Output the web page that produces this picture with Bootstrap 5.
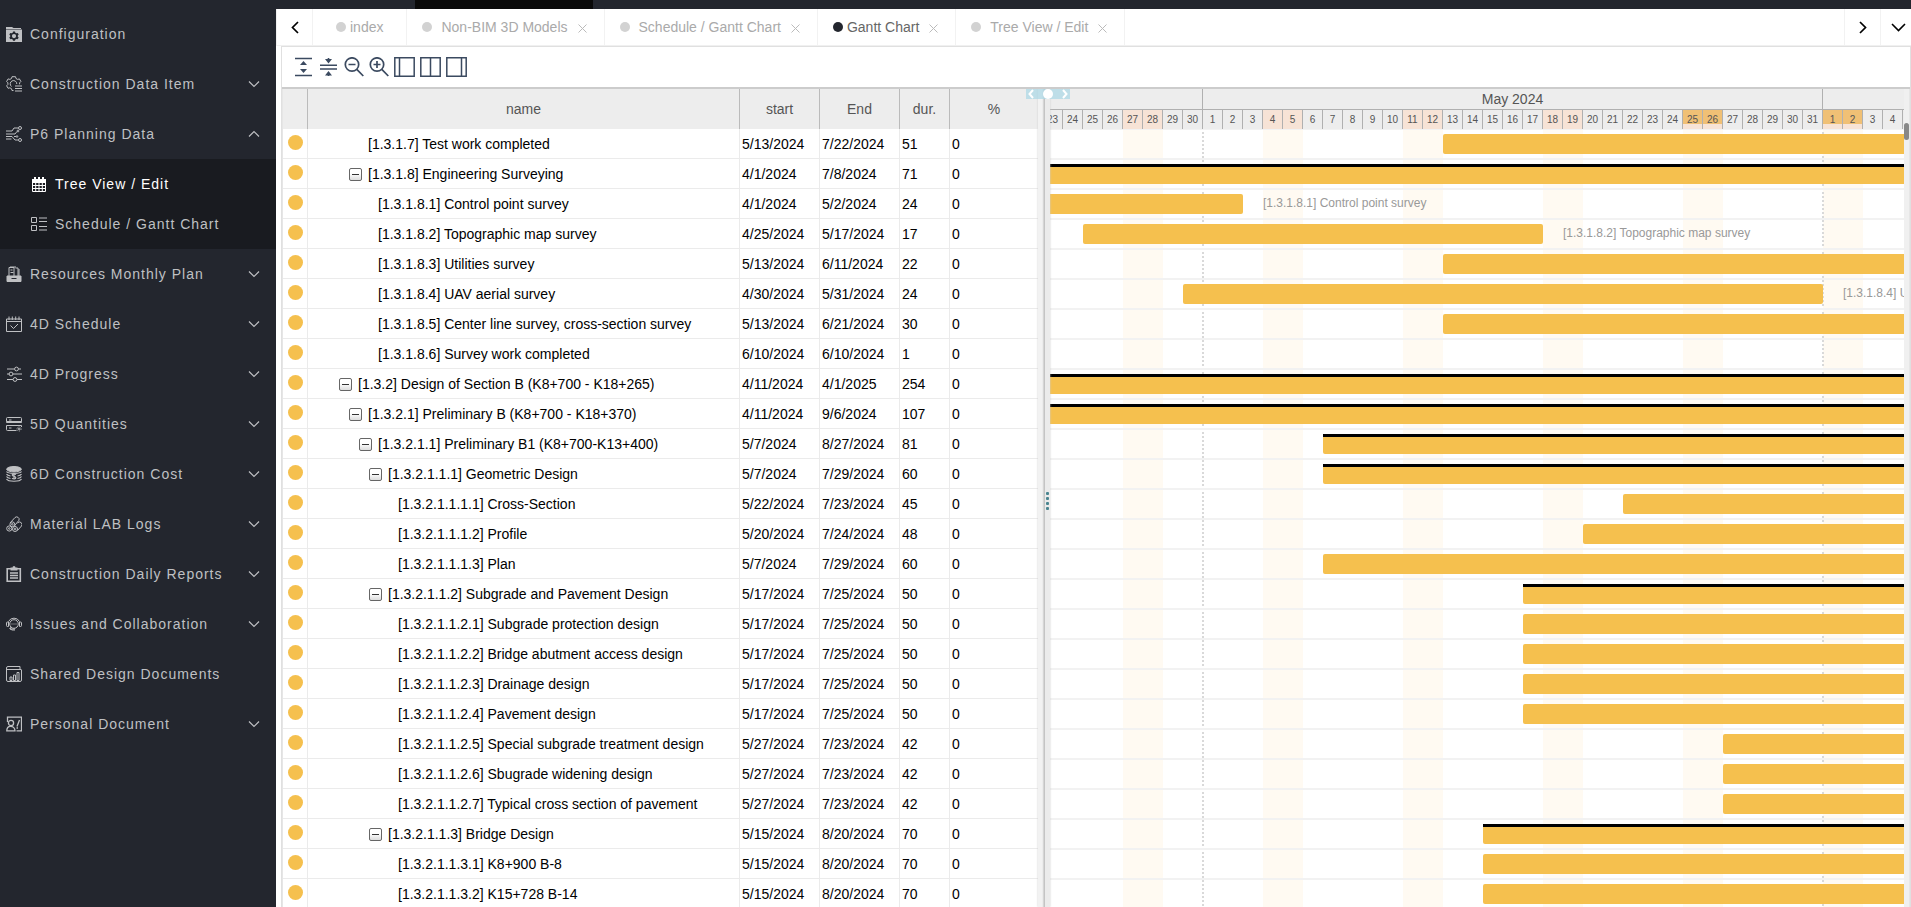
<!DOCTYPE html>
<html lang="en">
<head>
<meta charset="utf-8">
<meta name="viewport" content="width=device-width, initial-scale=1">
<title>Gantt Chart</title>
<link href="https://cdn.jsdelivr.net/npm/bootstrap@5.3.0/dist/css/bootstrap.min.css" rel="stylesheet">
<style>
:root { --day: 20px; --row: 30px; --dark: #23262e; --amber: #f5c04e; }
body { font-family: "Liberation Sans", Arial, sans-serif; font-size: 14px; line-height: 20px; color: #000; }
button { border: 0; background: none; padding: 0; color: inherit; }
svg { display: block; flex: none; }
.line-icon { fill: none; stroke: currentColor; }

/* top strip */
.top-strip { height: 9px; background: var(--dark); padding-left: 415px; }
.top-strip-item { width: 178px; background: #090909; }

/* side menu */
.side-menu { width: 276px; background: var(--dark); letter-spacing: 1px; }
.side-menu a { height: 50px; padding: 0 16px 0 6px; gap: 8px; color: #bfc0c3; text-decoration: none; white-space: nowrap; }
.side-menu .sub-menu { background: #191b20; padding: 5px 0; }
.side-menu .sub-menu a { height: 40px; padding-left: 31px; }
.side-menu a.current { color: #fff; }

/* page tabs */
.page-tabs { height: 37px; border-bottom: 1px solid #f0f0f0; border-left: 1px solid #f0f0f0; }
.page-tabs .edge-btn { width: 36px; border-right: 1px solid #f2f2f2; }
.page-tabs .edge-btn.at-end { border-right: 0; border-left: 1px solid #f2f2f2; }
.page-tabs .edge-btn.last-btn { width: 31px; padding-left: 5px; }
.page-tab { padding: 0 17px 0 15px; border-right: 1px solid #f2f2f2; color: #aaa; white-space: nowrap; }
.page-tab.home { padding: 0 23px; }
.page-tab.current { color: #666; }
.page-tab a { color: inherit; text-decoration: none; padding-left: 9px; }
.page-tab.home a, .page-tab.current a { padding-left: 4px; }
.tab-dot { width: 10px; height: 10px; border-radius: 50%; background: #d2d2d2; }
.current .tab-dot { background: var(--dark); }
.page-tab button { margin-left: 10px; padding-top: 2px; color: #bbb; }

/* work frame */
.work-frame { margin-left: 5px; border: 1px solid #e0e0e0; border-bottom: 0; }
.tool-row { height: 42px; padding: 0 12px; border-bottom: 2px solid #ccc; color: #3b4a60; }
.tool-set { width: 173px; }
.split-body { border: solid #e6e6e6; border-width: 0 1px; }

/* task grid */
.task-pane { width: 755px; flex: none; }
.task-grid { width: 100%; table-layout: fixed; border-collapse: separate; border-spacing: 0; }
.task-grid th { height: 40px; background: #ededed; border-right: 1px solid #bbb; color: #555; font-weight: 400; text-align: center; }
.task-grid td { height: var(--row); padding: 1px 2px 0; line-height: 28px; border: solid #ebebeb; border-width: 0 1px 1px 0; white-space: nowrap; overflow: hidden; }
.task-grid td:last-child, .task-grid th:last-child { border-right: 0; }
.col-dot { width: 25px; } .col-date { width: 80px; } .col-dur { width: 50px; } .col-pct { width: 88px; }
.state-dot { display: block; width: 15px; height: 15px; margin: -3px 0 0 3px; border-radius: 50%; background: var(--amber); }
.task-grid td.task-name { padding-left: calc(1px + var(--lvl) * 10px); }
.fold-slot { width: 19px; }
.fold-btn { display: block; width: 13px; height: 13px; border: 1px solid #666; border-radius: 2px; background: linear-gradient(#333, #333) center/7px 1px no-repeat, linear-gradient(#fff 40%, #dcdcdc); }

/* splitter */
.split-bar { width: 12px; flex: none; background: linear-gradient(90deg, #f2f2f2 0 4px, #e6e6e6 5px, #c4c4c4 6px 7px, #ebebeb 7px); box-shadow: 0 0 2px #ccc; z-index: 3; }
.split-arrows { top: 0; left: -12px; width: 44px; height: 10px; padding: 0 2px; background: rgba(173,216,230,.75); }
.split-knob { top: 0; left: 17px; width: 10px; height: 10px; border-radius: 50%; background: #fff; }
.split-grip { gap: 2px; padding: 6px 0 0 8px; }
.split-grip i { width: 3px; height: 3px; border-radius: 1px; background: #4a8590; }

/* time chart */
.time-head { height: 40px; background: #ededed; color: #555; }
.time-track { margin-left: -7px; }
.month-cell { flex: none; width: calc(var(--n) * var(--day)); height: 21px; border: solid #b0b0b0; border-width: 0 1px 1px 0; text-align: center; line-height: 20px; }
.day-cell { flex: none; width: var(--day); height: 19px; border-right: 1px solid #b0b0b0; font-size: 10px; line-height: 20px; text-align: center; }
.day-cell.off { background: #f7e3d6; }
.day-cell.off.hot { background: linear-gradient(#f0c075 14px, #f7e3d6 14px); }
.off-band { top: 0; bottom: 0; left: calc(var(--x) * var(--day)); width: 40px; background: #fffaf2; }
.month-line { top: 3px; bottom: 0; left: calc(var(--x) * var(--day) - 1px); width: 2px; background: repeating-linear-gradient(#d9d9d9 0 2px, transparent 2px 4px); }
.bar-row { position: relative; height: var(--row); border: solid #f2f2f2; border-width: 1px 0; }
.task-bar { top: 4px; left: calc(var(--x) * var(--day)); width: calc(var(--n) * var(--day)); height: 20px; border-radius: 2px; background: var(--amber); }
.task-bar.group { border-top: 3px solid #000; border-radius: 0 0 2px 2px; }
.bar-note { left: 100%; top: 0; padding-left: 20px; font-size: 12px; line-height: 18px; color: #999; white-space: nowrap; }
.scroll-rail { width: 5px; flex: none; background: #f0f0f0; padding-top: 34px; }
.scroll-thumb { height: 17px; border-radius: 3px; background: #888; }
</style>
</head>
<body class="vh-100 d-flex flex-column overflow-hidden bg-white">
<header class="top-strip d-flex flex-shrink-0"><div class="top-strip-item"></div></header>

<div class="d-flex flex-grow-1" style="min-height:0">
  <nav class="side-menu flex-shrink-0" aria-label="Main menu" id="sideMenu"></nav>

  <main class="flex-grow-1 d-flex flex-column overflow-hidden">
    <div class="page-tabs d-flex flex-shrink-0">
      <button type="button" class="edge-btn d-flex align-items-center justify-content-center" aria-label="Previous tabs"><svg class="line-icon" width="8" height="13" viewBox="0 0 8 13" stroke-width="1.7"><path d="M7 1 1.500 6.500 7 12"/></svg></button>
      <div class="d-flex flex-grow-1" id="pageTabs"></div>
      <button type="button" class="edge-btn at-end d-flex align-items-center justify-content-center" aria-label="Next tabs"><svg class="line-icon" width="8" height="13" viewBox="0 0 8 13" stroke-width="1.7"><path d="M1 1 6.500 6.500 1 12"/></svg></button>
      <button type="button" class="edge-btn at-end last-btn d-flex align-items-center justify-content-center" aria-label="Tab actions"><svg class="line-icon" width="15" height="9" viewBox="0 0 15 9" stroke-width="1.6"><path d="M1 1 7.500 7.500 14 1"/></svg></button>
    </div>

    <section class="work-frame flex-grow-1 d-flex flex-column overflow-hidden">
      <div class="tool-row d-flex align-items-center flex-shrink-0">
        <div class="tool-set d-flex justify-content-between">
          <button type="button" aria-label="Expand all"><svg class="line-icon" width="20" height="20" viewBox="0 0 20 20" stroke-width="1.600"><path d="M1 1.500h17M1 18.500h17M9.500 6v2M9.500 12v2"/><path d="M6 8h7L9.500 4zM6 12h7l-3.500 4z" fill="currentColor" stroke="none"/></svg></button>
          <button type="button" aria-label="Collapse all"><svg class="line-icon" width="20" height="20" viewBox="0 0 20 20" stroke-width="1.600"><path d="M1 8.200h17M1 12h17M9.500 1v2M9.500 17v2"/><path d="M6 2h7L9.500 6.500zM6 18.500h7L9.500 14z" fill="currentColor" stroke="none"/></svg></button>
          <button type="button" aria-label="Zoom out"><svg class="line-icon" width="20" height="20" viewBox="0 0 20 20" stroke-width="1.700"><circle cx="8" cy="7.500" r="6.700"/><path d="M4.500 7.500h7M12.800 12.300 19.300 19"/></svg></button>
          <button type="button" aria-label="Zoom in"><svg class="line-icon" width="20" height="20" viewBox="0 0 20 20" stroke-width="1.700"><circle cx="8" cy="7.500" r="6.700"/><path d="M4.500 7.500h7M8 4v7M12.800 12.300 19.300 19"/></svg></button>
          <button type="button" aria-label="Show grid only"><svg class="line-icon" width="21" height="20" viewBox="0 0 21 20" stroke-width="1.500"><path d="M.8.8h19.400v18.400H.8zM5.500 1v18"/></svg></button>
          <button type="button" aria-label="Show grid and chart"><svg class="line-icon" width="21" height="20" viewBox="0 0 21 20" stroke-width="1.500"><path d="M.8.8h19.400v18.400H.8zM10.500 1v18"/></svg></button>
          <button type="button" aria-label="Show chart only"><svg class="line-icon" width="21" height="20" viewBox="0 0 21 20" stroke-width="1.500"><path d="M.8.8h19.400v18.400H.8zM15.500 1v18"/></svg></button>
        </div>
      </div>

      <div class="split-body d-flex flex-grow-1 overflow-hidden">
        <div class="task-pane overflow-hidden">
          <table class="task-grid">
            <colgroup><col class="col-dot"><col><col class="col-date"><col class="col-date"><col class="col-dur"><col class="col-pct"></colgroup>
            <thead><tr><th></th><th>name</th><th>start</th><th>End</th><th>dur.</th><th>%</th></tr></thead>
            <tbody id="taskRows"></tbody>
          </table>
        </div>

        <div class="split-bar position-relative">
          <div class="split-arrows position-absolute text-white d-flex justify-content-between align-items-center">
            <svg class="line-icon" width="6" height="10" viewBox="0 0 6 10" stroke-width="2"><path d="M5 1 1.500 5 5 9"/></svg>
            <span class="split-knob position-absolute"></span>
            <svg class="line-icon" width="6" height="10" viewBox="0 0 6 10" stroke-width="2"><path d="M1 1 4.500 5 1 9"/></svg>
          </div>
          <div class="split-grip h-100 d-flex flex-column justify-content-center"><i></i><i></i><i></i><i></i></div>
        </div>

        <div class="flex-grow-1 overflow-hidden">
          <div class="time-head overflow-hidden">
            <div class="time-track d-flex" id="months"></div>
            <div class="time-track d-flex" id="days"></div>
          </div>
          <div class="time-track position-relative" id="bars"></div>
        </div>
        <div class="scroll-rail"><div class="scroll-thumb"></div></div>
      </div>
    </section>
  </main>
</div>

<script src="https://cdn.jsdelivr.net/npm/bootstrap@5.3.0/dist/js/bootstrap.bundle.min.js"></script>
<script>
// Menu icons, all on a 16 x 16 canvas
const icons = {
  folderGear: '<path d="M0 1h6l1.500 1H15v1H0z" fill="currentColor" stroke="none"/><path fill-rule="evenodd" d="M0 3.500h16V16H0zM7 5.500l-.3 1.200-1.200.6-1.200-.4-1 1.700.9.900v1.200l-.9.900 1 1.700 1.200-.4 1.200.6.300 1.200h2l.3-1.200 1.200-.6 1.200.4 1-1.700-.9-.9V9.500l.9-.9-1-1.700-1.200.4-1.200-.6L9 5.500zM8 8a2.100 2.100 0 1 1 0 4.200A2.100 2.100 0 0 1 8 8z" fill="currentColor" stroke="none"/>',
  gearList: '<path d="M7.500 14.500H6l-.5-1.800-1.600-.9-1.800.5L.6 9.800l1.300-1.300V6.800L.6 5.500l1.500-2.600 1.800.5 1.600-.9L6 .700h3.500l.5 1.800 1.600.9 1.800-.5 1.500 2.600-1.300 1.300v1.500"/><path d="M5.500 10.500a3.300 3.300 0 1 1 5.300-2.500M9 10h7M9 12.500h7M9 15h7"/>',
  flow: '<path d="M0 5h6l2-3h4M0 8h9l2-2.500M0 10.500h6l3 3.500h3M0 13h5.500M8 10.500h2"/><circle cx="14" cy="2" r="1.500"/><circle cx="12" cy="5" r=".9"/><circle cx="14" cy="14" r="1.500"/><circle cx="11" cy="10.500" r=".8"/>',
  calendar: '<path d="M1.500 3.500h13v12h-13zM1.500 6.500h13M1.500 9.500h13M1.500 12.500h13M4.700 4v11M8 4v11M11.300 4v11"/><path d="M1 3h14v3H1z" fill="currentColor" stroke="none"/><path d="M4 1v3M8 1v3M12 1v3" stroke-width="2"/>',
  blocks: '<path d="M.5 1.500h5v5h-5zM.5 9.500h5v5h-5zM8 2h8M8 5.500h8M8 10.500h8M8 14h8"/>',
  docs: '<path d="M3 10V1.500h5V10M4.500 4h2M4.500 6.500h3M9.500 2H12v8M13 3v7M4 1h6"/><path d="M1 10h14v5.500H1z" fill="currentColor"/><path d="M5.500 12.500h5" stroke="#23262e"/>',
  calCheck: '<path d="M.5 3h15v12.500H.5zM.5 5.500h15M3 .5V4M6.300.5V4M9.700.5V4M13 .5V4M4.500 9.500l3 3 4.500-4.500"/>',
  sliders: '<path d="M1 3h7.500M12.500 3H15M1 8h2M7 8h9M1 13.500h6M11 13.500h5"/><circle cx="10.500" cy="3" r="1.900"/><circle cx="5" cy="8" r="1.900"/><circle cx="9" cy="13.500" r="1.900"/>',
  servers: '<path d="M1.500 1.500h13a1 1 0 0 1 1 1v3h-15v-3a1 1 0 0 1 1-1zM.5 5.500v1h15v-1M10.500 14.500h-9a1 1 0 0 1-1-1v-4h15v1.500M3 4h2.500M3 12h2.500"/><circle cx="13" cy="13" r="2" stroke-dasharray="1 1"/><circle cx="13" cy="13" r=".7"/>',
  coins: '<ellipse cx="8" cy="3.200" rx="7.300" ry="2.700" fill="currentColor"/><path d="M.5 5.500C2 8 14 8 15.500 5.500M.5 8c.5 1 2 1.800 4 2M15.500 8c-.5 1-2 1.800-4 2M.5 10.500c.5 1 2 1.800 4 2M15.500 10.500c-.5 1-2 1.800-4 2M.5 13c1.500 3 13.500 3 15 0M10 8.500C8 7.500 6 8 6.300 9.300c.4 1.400 3.400.8 3.500 2.400.1 1.500-2.300 1.600-3.800.6M8 7.500v6" stroke-width="1.200"/>',
  pipes: '<circle cx="3.300" cy="12.500" r="2.600"/><circle cx="3.300" cy="12.500" r=".8"/><circle cx="9" cy="13" r="2.500"/><circle cx="9" cy="13" r=".8"/><circle cx="6.300" cy="8.300" r="2.400"/><circle cx="6.300" cy="8.300" r=".8"/><path d="M4 7 9 1.500a2.500 2.500 0 0 1 4 2.700L9 9M11 7.500l1-1a2.500 2.500 0 0 1 3.500 3.500L11.500 14.500M8.300 9.500l1.700 1"/>',
  clipboard: '<path d="M1.200 2.700h13.100v12.600H1.200z" stroke-width="1.600"/><path d="M4.500 4.500v-3h2a1.500 1.500 0 0 1 3 0h2v3z" fill="currentColor" stroke="none"/><path d="M4 7h8M4 9.500h8M4 12h8" stroke-width="1.300"/>',
  headset: '<path d="M2.500 5.500a6.200 6.200 0 0 1 11 0M2.500 6v4.500H1.500A1 1 0 0 1 .5 9.500V7a1 1 0 0 1 1-1zM13.500 6v4.500h1a1 1 0 0 0 1-1V7a1 1 0 0 0-1-1zM3.500 12.500A6 6 0 0 0 9 14"/><circle cx="8" cy="8" r="4.300"/><path d="M5.500 8h1M7.500 8h1M9.500 8h1M5 11l-1 2h5"/>',
  chartDoc: '<path d="M15.500 4v10a1.500 1.500 0 0 1-1.500 1.500H2A1.500 1.500 0 0 1 .5 14V2A1.500 1.500 0 0 1 2 .500h12M1 3.500h14.500M14 .500v3M4 11v3.500h2V11zM7.500 9v5.500h2V9zM11 6.500v8h2v-8z"/>',
  person: '<path d="M1.500 6V1.200h14v13.600h-5M.8 14.800c0-3 1.500-4.500 3.700-4.500s4.500 1.500 4.500 4.500zM11 10.500 13.500 4M10.500 12h1.500" stroke-width="1.300"/><circle cx="5" cy="7" r="2.600" stroke-width="1.300"/>'
};
const icon = n => `<svg class="line-icon" width="16" height="16" viewBox="0 0 16 16" aria-hidden="true">${icons[n]}</svg>`;
const chevron = up => `<svg class="line-icon ms-auto" width="12" height="8" viewBox="0 0 12 8" stroke-width="1.2" aria-hidden="true"><path d="${up ? 'M1 6.500 6 1.500l5 5' : 'M1 1.500l5 5 5-5'}"/></svg>`;

// label, icon, arrow ('' | down | up)
const menu = [
  ['Configuration', 'folderGear', ''], ['Construction Data Item', 'gearList', 'down'],
  ['P6 Planning Data', 'flow', 'up', [['Tree View / Edit', 'calendar', true], ['Schedule / Gantt Chart', 'blocks', false]]],
  ['Resources Monthly Plan', 'docs', 'down'], ['4D Schedule', 'calCheck', 'down'], ['4D Progress', 'sliders', 'down'],
  ['5D Quantities', 'servers', 'down'], ['6D Construction Cost', 'coins', 'down'], ['Material LAB Logs', 'pipes', 'down'],
  ['Construction Daily Reports', 'clipboard', 'down'], ['Issues and Collaboration', 'headset', 'down'],
  ['Shared Design Documents', 'chartDoc', ''], ['Personal Document', 'person', 'down']
];
sideMenu.innerHTML = menu.map(([label, ic, arrow, subs]) =>
  `<a href="#" class="d-flex align-items-center">${icon(ic)}<span>${label}</span>${arrow ? chevron(arrow === 'up') : ''}</a>` +
  (subs ? `<div class="sub-menu">${subs.map(([l, i, cur]) => `<a href="#" class="d-flex align-items-center${cur ? ' current' : ''}">${icon(i)}<span>${l}</span></a>`).join('')}</div>` : '')
).join('');

const tabs = [['index', 'home'], ['Non-BIM 3D Models', ''], ['Schedule / Gantt Chart', ''], ['Gantt Chart', 'current'], ['Tree View / Edit', '']];
pageTabs.innerHTML = tabs.map(([label, cls]) =>
  `<div class="page-tab d-flex align-items-center ${cls}"><span class="tab-dot"></span><a href="#">${label}</a>` +
  (cls === 'home' ? '' : `<button type="button" aria-label="Close ${label}"><svg class="line-icon" width="9" height="9" viewBox="0 0 9 9"><path d="M.5.5l8 8M8.500.5l-8 8"/></svg></button>`) + '</div>'
).join('');

// code, name, start, end, duration, is a group
const tasks = [
  ['1.3.1.7', 'Test work completed', '5/13/2024', '7/22/2024', 51],
  ['1.3.1.8', 'Engineering Surveying', '4/1/2024', '7/8/2024', 71, 1],
  ['1.3.1.8.1', 'Control point survey', '4/1/2024', '5/2/2024', 24],
  ['1.3.1.8.2', 'Topographic map survey', '4/25/2024', '5/17/2024', 17],
  ['1.3.1.8.3', 'Utilities survey', '5/13/2024', '6/11/2024', 22],
  ['1.3.1.8.4', 'UAV aerial survey', '4/30/2024', '5/31/2024', 24],
  ['1.3.1.8.5', 'Center line survey, cross-section survey', '5/13/2024', '6/21/2024', 30],
  ['1.3.1.8.6', 'Survey work completed', '6/10/2024', '6/10/2024', 1],
  ['1.3.2', 'Design of Section B (K8+700 - K18+265)', '4/11/2024', '4/1/2025', 254, 1],
  ['1.3.2.1', 'Preliminary B (K8+700 - K18+370)', '4/11/2024', '9/6/2024', 107, 1],
  ['1.3.2.1.1', 'Preliminary B1 (K8+700-K13+400)', '5/7/2024', '8/27/2024', 81, 1],
  ['1.3.2.1.1.1', 'Geometric Design', '5/7/2024', '7/29/2024', 60, 1],
  ['1.3.2.1.1.1.1', 'Cross-Section', '5/22/2024', '7/23/2024', 45],
  ['1.3.2.1.1.1.2', 'Profile', '5/20/2024', '7/24/2024', 48],
  ['1.3.2.1.1.1.3', 'Plan', '5/7/2024', '7/29/2024', 60],
  ['1.3.2.1.1.2', 'Subgrade and Pavement Design', '5/17/2024', '7/25/2024', 50, 1],
  ['1.3.2.1.1.2.1', 'Subgrade protection design', '5/17/2024', '7/25/2024', 50],
  ['1.3.2.1.1.2.2', 'Bridge abutment access design', '5/17/2024', '7/25/2024', 50],
  ['1.3.2.1.1.2.3', 'Drainage design', '5/17/2024', '7/25/2024', 50],
  ['1.3.2.1.1.2.4', 'Pavement design', '5/17/2024', '7/25/2024', 50],
  ['1.3.2.1.1.2.5', 'Special subgrade treatment design', '5/27/2024', '7/23/2024', 42],
  ['1.3.2.1.1.2.6', 'Sbugrade widening design', '5/27/2024', '7/23/2024', 42],
  ['1.3.2.1.1.2.7', 'Typical cross section of pavement', '5/27/2024', '7/23/2024', 42],
  ['1.3.2.1.1.3', 'Bridge Design', '5/15/2024', '8/20/2024', 70, 1],
  ['1.3.2.1.1.3.1', 'K8+900 B-8', '5/15/2024', '8/20/2024', 70],
  ['1.3.2.1.1.3.2', 'K15+728 B-14', '5/15/2024', '8/20/2024', 70]
];
taskRows.innerHTML = tasks.map(([code, name, start, end, dur, group]) =>
  `<tr><td><span class="state-dot"></span></td><td class="task-name" style="--lvl:${code.split('.').length}"><div class="d-flex align-items-center"><span class="fold-slot">${group ? `<button type="button" class="fold-btn" aria-label="Collapse ${code}"></button>` : ''}</span><span>[${code}] ${name}</span></div></td><td>${start}</td><td>${end}</td><td>${dur}</td><td>0</td></tr>`
).join('');

// Time scale: first visible day is 23 April 2024
const utc = s => { const [m, d, y] = s.split('/').map(Number); return Date.UTC(y, m - 1, d) / 864e5; };
const first = utc('4/23/2024'), last = utc('6/5/2024');
const at = s => utc(s) - first;
months.innerHTML = [['', 8], ['May 2024', 31], ['', 30]].map(([t, n]) => `<div class="month-cell" style="--n:${n}">${t}</div>`).join('');
let cells = '', bands = '';
for (let d = first; d < last; d++) {
  const date = new Date(d * 864e5), wd = date.getUTCDay(), off = wd === 0 || wd === 6;
  const hot = off && d >= utc('5/25/2024');
  cells += `<div class="day-cell${off ? ' off' : ''}${hot ? ' hot' : ''}">${date.getUTCDate()}</div>`;
  if (wd === 6) bands += `<div class="off-band position-absolute" style="--x:${d - first}"></div>`;
}
days.innerHTML = cells;
// A bar carries its name only when it ends inside the loaded days
bars.innerHTML = bands +
  ['5/1/2024', '6/1/2024'].map(s => `<div class="month-line position-absolute" style="--x:${at(s)}"></div>`).join('') +
  tasks.map(([code, name, start, end, , group]) =>
    `<div class="bar-row"><div class="task-bar position-absolute${group ? ' group' : ''}" style="--x:${at(start)};--n:${at(end) - at(start) + 1}">${utc(end) < last ? `<span class="bar-note position-absolute">[${code}] ${name}</span>` : ''}</div></div>`
  ).join('');
</script>
</body>
</html>
